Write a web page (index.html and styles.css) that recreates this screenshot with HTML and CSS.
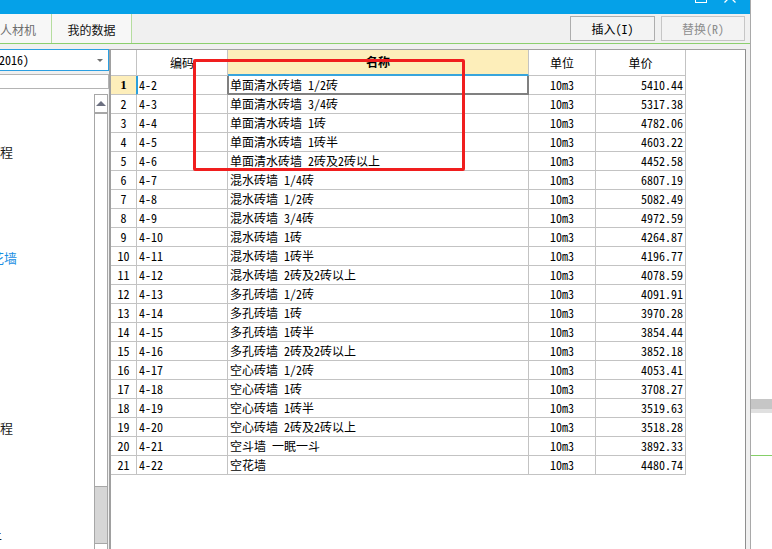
FILE: index.html
```html
<!DOCTYPE html>
<html lang="zh-CN">
<head>
<meta charset="utf-8">
<title>人材机 - 我的数据</title>
<link rel="stylesheet" href="styles.css">
</head>
<body>
<div class="desktop">
  <div class="window">
    <div class="titlebar">
      <div class="tb-max"></div>
      <svg class="tb-close" viewBox="0 0 12 12"><path d="M0.5 0.5 L11.5 11.5 M11.5 0.5 L0.5 11.5" stroke="#fff" stroke-width="1.3" fill="none"/></svg>
    </div>
    <div class="toolbar">
      <div class="tabs">
        <div class="tab tab-rcj">人材机</div>
        <div class="tab tab-mine">我的数据</div>
      </div>
      <div class="actions">
        <button class="btn">插入(I)</button>
        <button class="btn btn-off">替换(R)</button>
      </div>
    </div>
    <div class="content">
      <aside class="sidebar">
        <div class="combo"><span class="combo-text">(2016)</span><span class="combo-arrow"></span></div>
        <div class="filter"></div>
        <div class="tree">
          <ul class="tree-list">
            <li><span class="cut13">工程</span></li>
            <li></li><li></li><li></li><li></li>
            <li class="sel"><span class="cut22">空花墙</span></li>
            <li></li><li></li><li></li><li></li><li></li><li></li><li></li>
            <li><span class="cut13">工程</span></li>
            <li></li><li></li><li></li><li></li>
            <li><span class="cut11">土</span></li>
          </ul>
          <div class="vscroll">
            <div class="sb-up"><span class="tri-up"></span></div>
            <div class="sb-thumb"></div>
            <div class="sb-track"></div>
            <div class="sb-down"><span class="tri-down"></span></div>
          </div>
        </div>
      </aside>
      <section class="gridpanel">
        <div class="gr gh">
          <div class="c"></div>
          <div class="c">编码</div>
          <div class="c hname">名称</div>
          <div class="c">单位</div>
          <div class="c">单价</div>
        </div>
        <div class="gr r1"><div class="c num">1</div><div class="c code">4-2</div><div class="c name">单面清水砖墙 1/2砖</div><div class="c unit">10m3</div><div class="c price">5410.44</div></div>
        <div class="gr"><div class="c num">2</div><div class="c code">4-3</div><div class="c name">单面清水砖墙 3/4砖</div><div class="c unit">10m3</div><div class="c price">5317.38</div></div>
        <div class="gr"><div class="c num">3</div><div class="c code">4-4</div><div class="c name">单面清水砖墙 1砖</div><div class="c unit">10m3</div><div class="c price">4782.06</div></div>
        <div class="gr"><div class="c num">4</div><div class="c code">4-5</div><div class="c name">单面清水砖墙 1砖半</div><div class="c unit">10m3</div><div class="c price">4603.22</div></div>
        <div class="gr"><div class="c num">5</div><div class="c code">4-6</div><div class="c name">单面清水砖墙 2砖及2砖以上</div><div class="c unit">10m3</div><div class="c price">4452.58</div></div>
        <div class="gr"><div class="c num">6</div><div class="c code">4-7</div><div class="c name">混水砖墙 1/4砖</div><div class="c unit">10m3</div><div class="c price">6807.19</div></div>
        <div class="gr"><div class="c num">7</div><div class="c code">4-8</div><div class="c name">混水砖墙 1/2砖</div><div class="c unit">10m3</div><div class="c price">5082.49</div></div>
        <div class="gr"><div class="c num">8</div><div class="c code">4-9</div><div class="c name">混水砖墙 3/4砖</div><div class="c unit">10m3</div><div class="c price">4972.59</div></div>
        <div class="gr"><div class="c num">9</div><div class="c code">4-10</div><div class="c name">混水砖墙 1砖</div><div class="c unit">10m3</div><div class="c price">4264.87</div></div>
        <div class="gr"><div class="c num">10</div><div class="c code">4-11</div><div class="c name">混水砖墙 1砖半</div><div class="c unit">10m3</div><div class="c price">4196.77</div></div>
        <div class="gr"><div class="c num">11</div><div class="c code">4-12</div><div class="c name">混水砖墙 2砖及2砖以上</div><div class="c unit">10m3</div><div class="c price">4078.59</div></div>
        <div class="gr"><div class="c num">12</div><div class="c code">4-13</div><div class="c name">多孔砖墙 1/2砖</div><div class="c unit">10m3</div><div class="c price">4091.91</div></div>
        <div class="gr"><div class="c num">13</div><div class="c code">4-14</div><div class="c name">多孔砖墙 1砖</div><div class="c unit">10m3</div><div class="c price">3970.28</div></div>
        <div class="gr"><div class="c num">14</div><div class="c code">4-15</div><div class="c name">多孔砖墙 1砖半</div><div class="c unit">10m3</div><div class="c price">3854.44</div></div>
        <div class="gr"><div class="c num">15</div><div class="c code">4-16</div><div class="c name">多孔砖墙 2砖及2砖以上</div><div class="c unit">10m3</div><div class="c price">3852.18</div></div>
        <div class="gr"><div class="c num">16</div><div class="c code">4-17</div><div class="c name">空心砖墙 1/2砖</div><div class="c unit">10m3</div><div class="c price">4053.41</div></div>
        <div class="gr"><div class="c num">17</div><div class="c code">4-18</div><div class="c name">空心砖墙 1砖</div><div class="c unit">10m3</div><div class="c price">3708.27</div></div>
        <div class="gr"><div class="c num">18</div><div class="c code">4-19</div><div class="c name">空心砖墙 1砖半</div><div class="c unit">10m3</div><div class="c price">3519.63</div></div>
        <div class="gr"><div class="c num">19</div><div class="c code">4-20</div><div class="c name">空心砖墙 2砖及2砖以上</div><div class="c unit">10m3</div><div class="c price">3518.28</div></div>
        <div class="gr"><div class="c num">20</div><div class="c code">4-21</div><div class="c name">空斗墙 一眠一斗</div><div class="c unit">10m3</div><div class="c price">3892.33</div></div>
        <div class="gr"><div class="c num">21</div><div class="c code">4-22</div><div class="c name">空花墙</div><div class="c unit">10m3</div><div class="c price">4480.74</div></div>
      </section>
    </div>
    <div class="mark"></div>
  </div>
  <div class="sidewin">
    <div class="sw-bar"></div>
    <div class="sw-line"></div>
  </div>
</div>
</body>
</html>
```

FILE: styles.css
```css
html, body {
  margin: 0;
  padding: 0;
}
body {
  width: 772px;
  height: 549px;
  overflow: hidden;
  background: #fff;
  font-family: "Noto Sans Mono CJK SC", "Noto Sans CJK SC", monospace;
  font-size: 12px;
  color: #000;
}
.desktop {
  display: flex;
  height: 549px;
}
.window {
  position: relative;
  width: 751px;
  flex: none;
  display: flex;
  flex-direction: column;
  background: #f0f0f0;
  border-right: 1px solid #a9a9a9;
  box-sizing: border-box;
}
.titlebar {
  height: 14px;
  flex: none;
  background: #05a1e8;
  display: flex;
  justify-content: flex-end;
  align-items: flex-start;
  overflow: hidden;
}
.tb-max {
  width: 12px;
  height: 12px;
  box-sizing: border-box;
  border: 1px solid #fff;
  margin-top: -9px;
}
.tb-close {
  width: 12px;
  height: 12px;
  margin-top: -9px;
  margin-left: 17px;
  margin-right: 14px;
}
.toolbar {
  height: 30px;
  flex: none;
  box-sizing: border-box;
  border-bottom: 1px solid #8ccf6e;
  display: flex;
  justify-content: space-between;
}
.tabs {
  display: flex;
}
.tab {
  height: 29px;
  box-sizing: border-box;
  border-right: 1px solid #b5dd9f;
  font-family: "Noto Sans CJK SC", sans-serif;
  font-size: 12px;
  line-height: 31px;
  background: #f7f7f7;
}
.tab-rcj {
  width: 52px;
  color: #6e6e6e;
}
.tab-mine {
  width: 80px;
  text-align: center;
  color: #111;
}
.actions {
  display: flex;
  gap: 6px;
  padding: 2px 5px 0 0;
}
.btn {
  width: 85px;
  height: 25px;
  box-sizing: border-box;
  border: 1px solid #adadad;
  background: #f3f3f3;
  font-family: "Noto Sans Mono CJK SC", "Noto Sans CJK SC", monospace;
  font-size: 12px;
  color: #000;
  padding: 0;
  line-height: 23px;
}
.btn-off {
  width: 84px;
  color: #8d8d8d;
  border-color: #c6c6c6;
}
.content {
  flex: 1;
  min-height: 0;
  display: flex;
  padding-top: 5px;
}
.sidebar {
  width: 109px;
  flex: none;
  display: flex;
  flex-direction: column;
}
.combo {
  height: 22px;
  flex: none;
  box-sizing: border-box;
  border: 1px solid #2b9fe2;
  border-left: none;
  background: #fff;
  display: flex;
  align-items: center;
  justify-content: space-between;
  overflow: hidden;
}
.combo-text {
  margin-left: -7px;
  line-height: 20px;
}
.combo-arrow {
  width: 0;
  height: 0;
  border-left: 3px solid transparent;
  border-right: 3px solid transparent;
  border-top: 3px solid #707070;
  margin-right: 5px;
}
.filter {
  margin-top: 3px;
  height: 15px;
  flex: none;
  box-sizing: border-box;
  border: 1px solid #b4b4b4;
  border-left: none;
  background: #fff;
}
.tree {
  flex: 1;
  min-height: 0;
  width: 108px;
  background: #fff;
  display: flex;
  overflow: hidden;
}
.tree-list {
  flex: 1;
  margin: 0;
  padding: 52.4px 0 0 0;
  list-style: none;
  font-family: "Noto Sans CJK SC", sans-serif;
  font-size: 13px;
  color: #1a1a1a;
  overflow: hidden;
  white-space: nowrap;
}
.tree-list li {
  height: 21.2px;
  line-height: 21.2px;
}
.tree-list li.sel {
  color: #1a8fe3;
}
.cut13 { margin-left: -13px; }
.cut22 { margin-left: -22px; }
.cut11 { margin-left: -11px; }
.vscroll {
  width: 14px;
  flex: none;
  margin-top: 5px;
  display: flex;
  flex-direction: column;
}
.sb-up, .sb-down {
  height: 20px;
  flex: none;
  box-sizing: border-box;
  border: 1px solid #a7a7a7;
  background: #fff;
  display: flex;
  align-items: center;
  justify-content: center;
}
.sb-up {
  border-bottom-width: 2px;
}
.tri-up {
  width: 0;
  height: 0;
  border-left: 5px solid transparent;
  border-right: 5px solid transparent;
  border-bottom: 5px solid #6c7080;
}
.tri-down {
  width: 0;
  height: 0;
  border-left: 5px solid transparent;
  border-right: 5px solid transparent;
  border-top: 5px solid #6c7080;
}
.sb-thumb {
  height: 373px;
  flex: none;
  box-sizing: border-box;
  border: 1px solid #a7a7a7;
  border-top: none;
  background: #fff;
}
.sb-track {
  height: 56px;
  flex: none;
  box-sizing: border-box;
  border-left: 1px solid #a7a7a7;
  border-right: 1px solid #a7a7a7;
  background: #d6d6d6;
}
.gridpanel {
  flex: 1;
  min-width: 0;
  background: #fff;
  border-left: 2px solid #a0a0a0;
  border-top: 1px solid #a0a0a0;
  border-right: 1px solid #8f8f8f;
  margin-right: 4px;
  overflow: hidden;
}
.gr {
  display: grid;
  grid-template-columns: 26px 91px 301px 67px 90px;
  height: 19px;
}
.c {
  box-sizing: border-box;
  border-right: 1px solid #c3c3c3;
  border-bottom: 1px solid #c3c3c3;
  white-space: nowrap;
  overflow: hidden;
  line-height: 18px;
}
.gh {
  height: 26px;
}
.gh .c {
  text-align: center;
  line-height: 25px;
}
.gh .hname {
  background: #fdeeba;
  border-bottom: 2px solid #38a5dc;
  font-weight: bold;
  line-height: 24px;
}
.num { text-align: center; }
.code { padding-left: 2px; }
.name { padding-left: 2px; }
.unit { text-align: center; }
.price { text-align: right; padding-right: 2px; }
.r1 .num {
  background: #fdeeba;
  font-family: "Liberation Serif", serif;
  font-weight: bold;
  font-size: 13px;
  border-right-color: #2ba0dc;
}
.r1 .code {
  box-shadow: inset 1px 0 #2ba0dc;
  border-right-color: #808080;
}
.r1 .name {
  border-right-color: #808080;
  border-bottom-color: #808080;
  box-shadow: inset -1px 0 #808080, inset 0 -1px #808080, inset 1px 0 #808080;
}
.mark {
  position: absolute;
  left: 193px;
  top: 59px;
  width: 272px;
  height: 112px;
  box-sizing: border-box;
  border: 3px solid #f01e1e;
  border-radius: 2px;
  pointer-events: none;
}
.sidewin {
  flex: 1;
  background: #fff;
  padding-top: 399px;
  box-sizing: border-box;
}
.sw-bar {
  height: 14px;
  background: linear-gradient(#c6c6c6 70%, #e0e0e0 70%);
}
.sw-line {
  margin-top: 42px;
  height: 1px;
  background: #85cf68;
}
```
